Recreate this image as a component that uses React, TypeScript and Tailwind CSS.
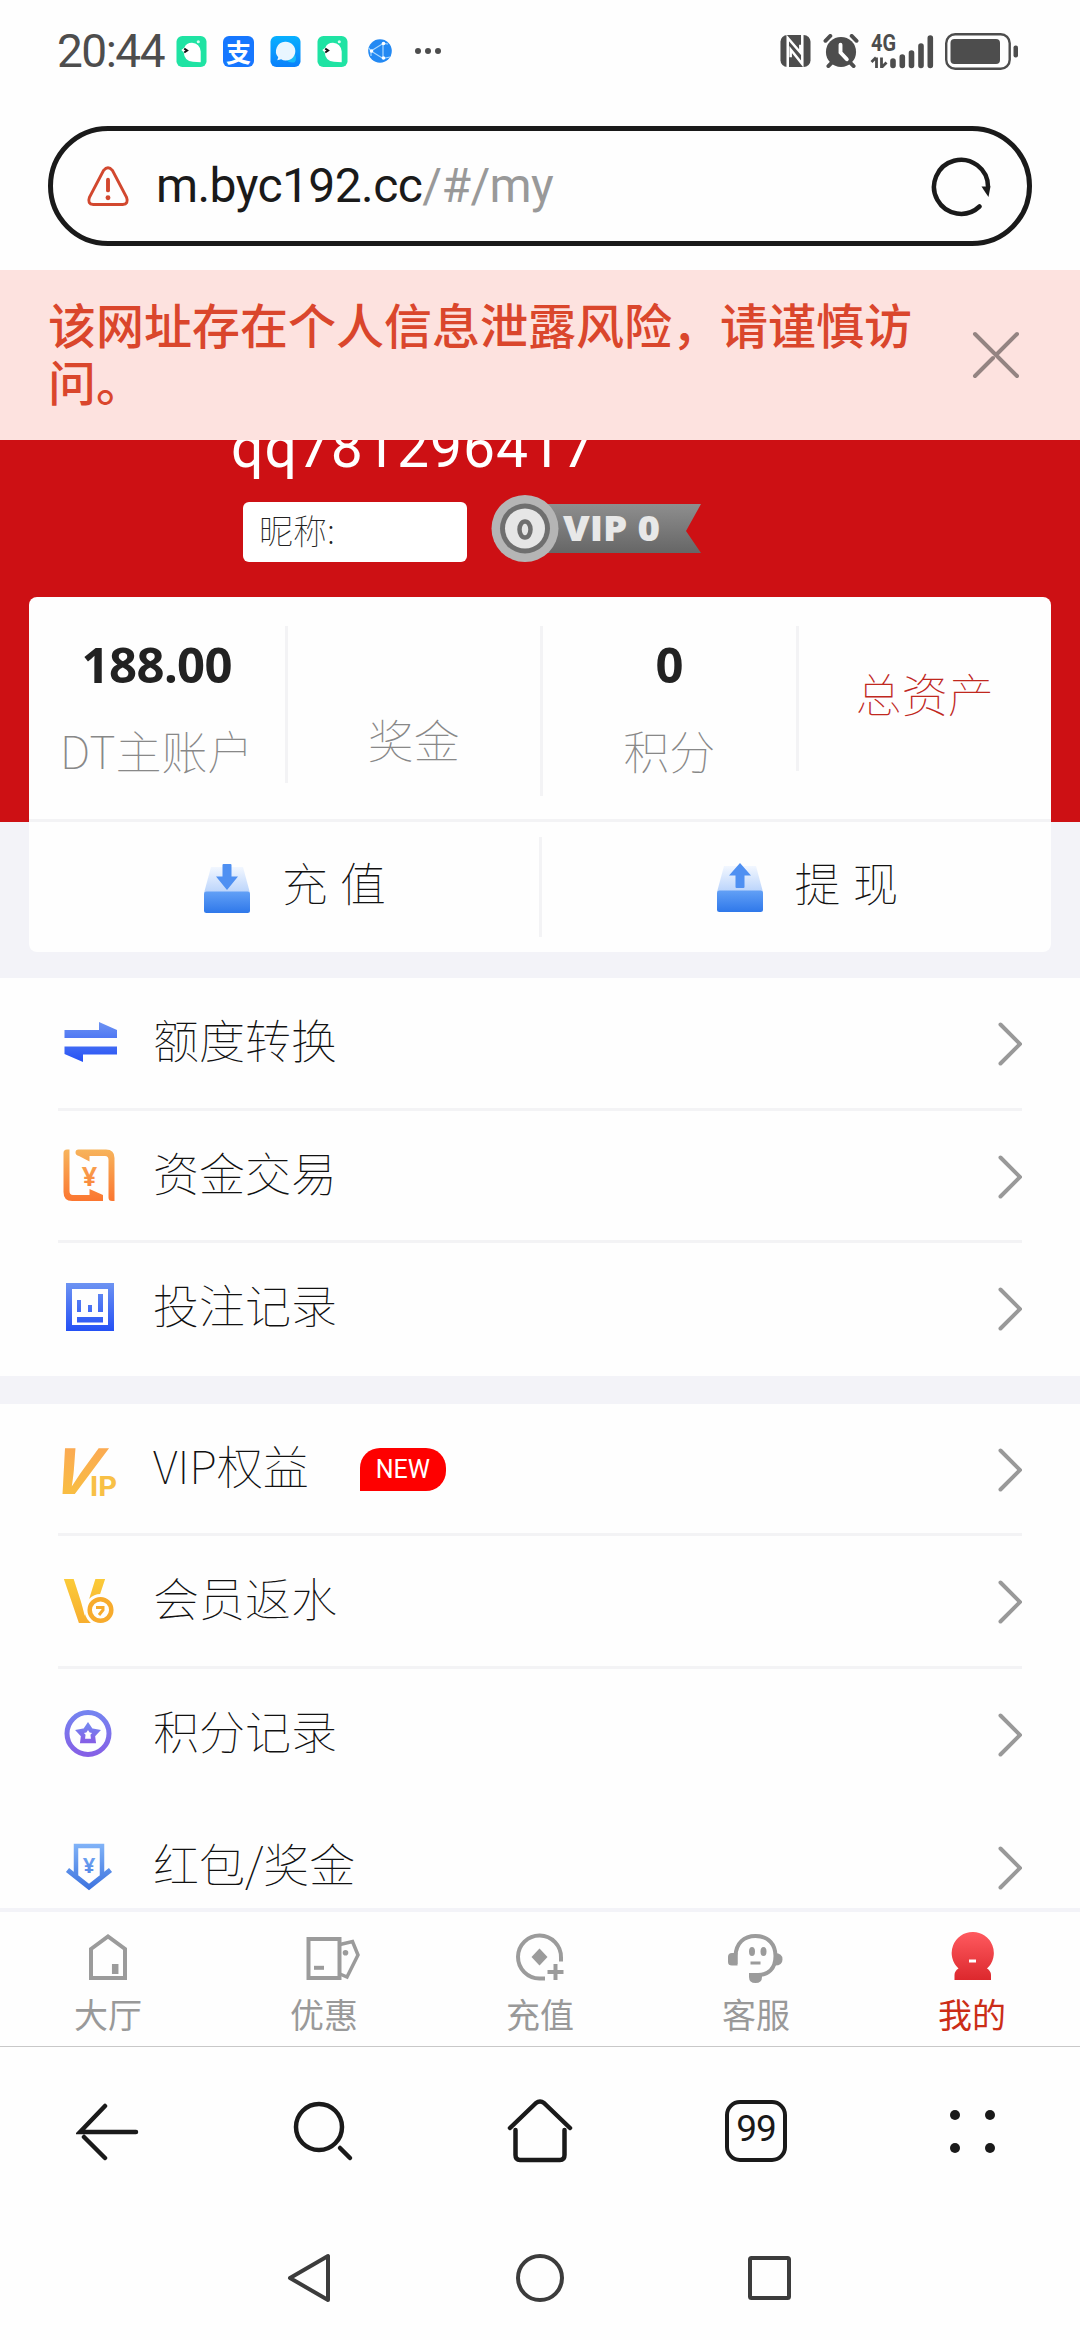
import React from "react";

const accounts = [
  { label: "DT主账户", value: "188.00" },
  { label: "奖金", value: "" },
  { label: "积分", value: "0" },
];

const tabs = [
  { name: "大厅", icon: <HallIcon /> },
  { name: "优惠", icon: <PromoIcon /> },
  { name: "充值", icon: <RechargeIcon /> },
  { name: "客服", icon: <ServiceIcon /> },
  { name: "我的", icon: <MineIcon />, active: true },
];

const recordMenu = [
  { name: "额度转换", icon: <TransferIcon /> },
  { name: "资金交易", icon: <FundsIcon /> },
  { name: "投注记录", icon: <BetIcon /> },
];

const memberMenu = [
  { name: "VIP权益", icon: <VipIcon />, isNew: true },
  { name: "会员返水", icon: <RebateIcon /> },
  { name: "积分记录", icon: <PointsIcon />, noLine: true },
  { name: "红包/奖金", icon: <BonusIcon />, noLine: true },
];

function Gradient({ id, from, to }: { id: string; from: string; to: string }) {
  return (
    <defs>
      <linearGradient id={id} x1="0" y1="0" x2="0" y2="1">
        <stop offset="0" stopColor={from} />
        <stop offset="1" stopColor={to} />
      </linearGradient>
    </defs>
  );
}

/* Menu icons */
function TransferIcon() {
  return (
    <svg width="60" height="60" viewBox="0 0 60 60">
      <defs>
        <linearGradient id="transfer" x1="0" y1="10" x2="0" y2="50" gradientUnits="userSpaceOnUse">
          <stop offset="0" stopColor="#6d93f2" />
          <stop offset="1" stopColor="#2450f5" />
        </linearGradient>
      </defs>
      <path d="M4.500 18H39V10L57 18V26H4.500Z M4.500 34.500H57V42.500H23V50L4.500 42Z" fill="url(#transfer)" />
    </svg>
  );
}

function FundsIcon() {
  return (
    <svg width="60" height="60" viewBox="0 0 60 60">
      <defs>
        <linearGradient id="funds" x1="0" y1="4" x2="0" y2="56" gradientUnits="userSpaceOnUse">
          <stop offset="0" stopColor="#f7b45c" />
          <stop offset="1" stopColor="#fb7630" />
        </linearGradient>
      </defs>
      <g fill="url(#funds)">
        <path d="M3.500 8Q3.500 4.500 7 4.500H9.500V46Q9.500 50 13 50H29.500V44L43 50V56H12Q3.500 56 3.500 47Z" />
        <path d="M15.500 7.500Q15.500 4.500 18.500 4.500H46Q54.500 4.500 54.500 13V56H52Q48.500 56 48.500 52.500V15Q48.500 11 45 11H29.500V16.500L19 11Q15.500 10 15.500 7.500Z" />
        <text x="29.500" y="40.500" textAnchor="middle" fontSize="27" fontWeight="700" fontFamily="Noto Sans, sans-serif">¥</text>
      </g>
    </svg>
  );
}

function BetIcon() {
  return (
    <svg width="60" height="60" viewBox="0 0 60 60">
      <defs>
        <linearGradient id="bet" x1="0" y1="6" x2="0" y2="54" gradientUnits="userSpaceOnUse">
          <stop offset="0" stopColor="#6d93f2" />
          <stop offset="1" stopColor="#2450f5" />
        </linearGradient>
      </defs>
      <path d="M6 6H54V54H6Z M12 12V48H48V12Z" fillRule="evenodd" fill="url(#bet)" />
      <path d="M17 23h4v12h-4Z M28 28h4v7h-4Z M38 17h5v18h-5Z M17 40h26v5.500h-26Z" fill="url(#bet)" />
    </svg>
  );
}

function VipIcon() {
  return (
    <svg className="overflow-visible" width="60" height="60" viewBox="0 0 60 60">
      <Gradient id="vip" from="#fca458" to="#f8c43c" />
      <g fill="url(#vip)" fontFamily="Inter, sans-serif" fontWeight="700">
        <text transform="translate(-15 56) skewX(-22)" fontSize="63" textLength="47" lengthAdjust="spacingAndGlyphs">V</text>
        <text x="30" y="58" fontSize="27" fill="#f8c046" textLength="27" lengthAdjust="spacingAndGlyphs">IP</text>
      </g>
    </svg>
  );
}

function RebateIcon() {
  return (
    <svg width="60" height="60" viewBox="0 0 60 60">
      <Gradient id="rebate" from="#fcd43c" to="#f6a52c" />
      <text x="2.500" y="53" fontSize="60" fontWeight="700" fontFamily="Inter, sans-serif" fill="url(#rebate)" textLength="44" lengthAdjust="spacingAndGlyphs">V</text>
      <circle cx="40.500" cy="40" r="16" fill="#fefefe" />
      <circle cx="40.500" cy="40" r="10.800" fill="none" stroke="#f7ab2d" strokeWidth="4.500" />
      <path d="M36 37.500H43V40L39 45" fill="none" stroke="#f7ab2d" strokeWidth="3" />
    </svg>
  );
}

function PointsIcon() {
  return (
    <svg width="60" height="60" viewBox="0 0 60 60">
      <Gradient id="points" from="#7583f0" to="#8560e6" />
      <g fill="none" stroke="url(#points)">
        <circle cx="28" cy="30.500" r="21" strokeWidth="5" />
        <path d="M28 23L31 27.500L36.500 28.500L32.800 32.500L33.500 38H22.500L23.200 32.500L19.500 28.500L25 27.500Z" strokeWidth="4.500" />
      </g>
    </svg>
  );
}

function BonusIcon() {
  return (
    <svg width="60" height="60" viewBox="0 0 60 60">
      <defs>
        <linearGradient id="bonus" x1="0" y1="7" x2="0" y2="54" gradientUnits="userSpaceOnUse">
          <stop offset="0" stopColor="#82b4f8" />
          <stop offset="1" stopColor="#3c72de" />
        </linearGradient>
      </defs>
      <path d="M7.500 34L29 51L50.500 34" fill="none" stroke="url(#bonus)" strokeWidth="5" />
      <path d="M16 39V10H42V39" fill="none" stroke="url(#bonus)" strokeWidth="4.500" />
      <text x="29" y="37" textAnchor="middle" fontSize="22" fontWeight="700" fontFamily="Noto Sans, sans-serif" fill="url(#bonus)">¥</text>
    </svg>
  );
}

/* Tab bar icons */
function HallIcon() {
  return (
    <svg width="60" height="50" viewBox="0 0 60 50" fill="none" stroke="#9b9b9b" strokeWidth="4">
      <path d="M13 17L30 4.500L47 17V46H13Z" />
      <path d="M37.200 32V42" strokeWidth="6.500" />
    </svg>
  );
}

function PromoIcon() {
  return (
    <svg className="overflow-visible" width="60" height="50" viewBox="0 0 60 50" fill="none" stroke="#9b9b9b" strokeWidth="4">
      <path d="M14.500 7H45.500V46H14.500Z" />
      <path d="M20 35.800H30" />
      <path d="M46 12.500L58.500 9.500L64 23L53 45L46 42" strokeWidth="3.500" />
      <circle cx="51.500" cy="20.700" r="2.800" fill="#9b9b9b" stroke="none" />
    </svg>
  );
}

function RechargeIcon() {
  return (
    <svg width="60" height="50" viewBox="0 0 60 50" fill="none" stroke="#9b9b9b" strokeWidth="4">
      <path d="M51 29.500V25.500A21.500 21.500 0 1 0 29.500 46.500H35" />
      <path d="M29.500 16.500L37.500 25L29.500 33.500L21.500 25Z" fill="#9b9b9b" stroke="none" />
      <path d="M45.500 32V48M37.500 40H53.500" />
    </svg>
  );
}

function ServiceIcon() {
  return (
    <svg width="60" height="54" viewBox="0 0 60 54" fill="none" stroke="#9b9b9b" strokeWidth="4">
      <path d="M9.500 32V24C10 11 18 4 29.500 4C43 4 49.500 13 49.500 24C49.500 37 42 43 32 43" />
      <path d="M2 25Q2 21 6 21H11.500V33.500H6Q2 33.500 2 30Z M49 21Q56.500 21 56.500 27.500Q56.500 33.500 49 33.500Z M23 41H36V45Q36 51 29.500 51Q23 51 23 45Z" fill="#9b9b9b" stroke="none" />
      <ellipse cx="26" cy="19.500" rx="3" ry="4.500" fill="#9b9b9b" stroke="none" />
      <ellipse cx="37.500" cy="19.500" rx="3" ry="4.500" fill="#9b9b9b" stroke="none" />
      <path d="M24.500 31H34.500" strokeWidth="3" />
    </svg>
  );
}

function MineIcon() {
  return (
    <svg width="60" height="50" viewBox="0 0 60 50">
      <Gradient id="mine" from="#ff5a5f" to="#dc282d" />
      <path d="M30.500 0A21 21 0 0 1 45 36.500Q49 39 49 43V48H12.500V43Q12.500 39 16.500 36.500A21 21 0 0 1 30.500 0Z" fill="url(#mine)" />
      <path d="M27 29H34" stroke="#fff" strokeWidth="3" />
    </svg>
  );
}

function TrayIcon({ up }: { up?: boolean }) {
  return (
    <svg width="46" height="50" viewBox="0 0 46 50">
      <Gradient id="trayTop" from="#f2f7ff" to="#b9d3fb" />
      <Gradient id="trayBox" from="#62a0f6" to="#2f78ea" />
      <path d="M7 3H39L46 29H0Z" fill="url(#trayTop)" />
      <rect x="0" y="27.500" width="46" height="21.500" rx="2.500" fill="url(#trayBox)" />
      {up ? (
        <path d="M23 0L34 12.500H27.500V24Q27.500 25 26.500 25H19.500Q18.500 25 18.500 24V12.500H12Z" fill="#4f90f2" />
      ) : (
        <path d="M23 26L34 12.500H27.500V1Q27.500 0 26.500 0H19.500Q18.500 0 18.500 1V12.500H12Z" fill="#4f90f2" />
      )}
    </svg>
  );
}

/* Status bar app icons */
function BirdApp() {
  return (
    <svg width="31" height="31" viewBox="0 0 31 32">
      <rect width="31" height="32" rx="6" fill="#1fe3a3" />
      <path d="M5 14.500L8 12Q10 7 16 7Q24 7.500 25 16V27Q21 26.500 17 26.500Q8 26 7.500 17Z" fill="#fff" />
      <circle cx="22.500" cy="6" r="1.600" fill="#d5fff0" />
      <path d="M8 13L11 15L8 17" stroke="#111" strokeWidth="2" fill="none" />
    </svg>
  );
}

function StatusBar() {
  return (
    <div className="flex h-[102px] shrink-0 items-center pl-[57px] pr-[62px] text-[#4d4d4d]">
      <span className="w-[119px] font-[Roboto] text-[46px] leading-none tracking-[-1.500px]">20:44</span>
      <div className="flex items-center gap-4">
        <BirdApp />
        <div className="flex h-[31px] w-[31px] items-center justify-center rounded-md bg-[#1677ff] font-['Noto_Sans_CJK_SC',sans-serif] text-[25px] leading-none font-bold text-white">
          支
        </div>
        <svg width="31" height="31" viewBox="0 0 31 32">
          <Gradient id="chatApp" from="#08b0ff" to="#0a80fb" />
          <rect width="31" height="32" rx="6" fill="url(#chatApp)" />
          <path d="M17 21Q25 16 26 21Q27 25 25 27Q19 28 17 25Z" fill="#17b9f8" />
          <path d="M15 6A9.700 9.700 0 1 1 11 24L7 25L8 22A9.700 9.700 0 0 1 15 6Z" fill="#e9f6ff" />
        </svg>
        <BirdApp />
      </div>
      <svg className="ml-5" width="24" height="24" viewBox="0 0 24 24">
        <circle cx="12" cy="12" r="11.800" fill="#2389f3" />
        <path d="M3 12L15 4.500V19.500ZM0 8L3 12V17M15 4.500L20 5M15 19.500L22 18" fill="none" stroke="#a9d8ff" strokeWidth="1.200" />
        <circle cx="3.500" cy="12" r="1.800" fill="#fff" />
        <circle cx="15.500" cy="4.500" r="1.800" fill="#fff" />
        <circle cx="15.500" cy="19" r="1.800" fill="#fff" />
      </svg>
      <div className="ml-[23px] flex gap-1">
        <i className="size-1.5 rounded-full bg-[#4d4d4d]" />
        <i className="size-1.5 rounded-full bg-[#4d4d4d]" />
        <i className="size-1.5 rounded-full bg-[#4d4d4d]" />
      </div>

      <svg className="ml-auto" width="31" height="32" viewBox="0 0 31 33">
        <rect width="31" height="33" rx="7" fill="#4d4d4d" />
        <path d="M7.500 33V3L20.500 18V10M22.500 0V30L10.500 15V23" fill="none" stroke="#fff" strokeWidth="2.600" />
      </svg>
      <svg className="ml-3" width="36" height="34" viewBox="0 0 36 35">
        <circle cx="18" cy="18.500" r="15.500" fill="#4d4d4d" />
        <path d="M2 7L7 2M34 7L29 2M5 33L9 29M31 33L27 29" stroke="#4d4d4d" strokeWidth="4" strokeLinecap="round" />
        <path d="M17.500 11V19L24 26" stroke="#fff" strokeWidth="4" fill="none" strokeLinecap="round" />
      </svg>
      <svg className="ml-3 overflow-visible" width="63" height="35" viewBox="0 0 63 35">
        <text x="0" y="17" fontSize="23" fontWeight="700" fontFamily="Roboto, sans-serif" fill="#4d4d4d" textLength="25" lengthAdjust="spacingAndGlyphs">4G</text>
        <path d="M5.500 23.500V34M0.500 28L5 23.500M10.500 23.500V34M11 33L15.500 28.500" stroke="#4d4d4d" strokeWidth="2.800" />
        <path d="M22 27V31.500M31.300 23V31.500M40.500 19V31.500M50 12V31.500M59.300 4V31.500" stroke="#4d4d4d" strokeWidth="5.600" strokeLinecap="round" />
      </svg>
      <svg className="ml-[11px]" width="73" height="37" viewBox="0 0 73 37">
        <rect x="1.200" y="1.200" width="63.500" height="34.600" rx="9" fill="none" stroke="#4d4d4d" strokeWidth="2.400" />
        <rect x="5.500" y="6" width="49.500" height="25" rx="4" fill="#4d4d4d" />
        <rect x="68.500" y="12.500" width="4.500" height="12" rx="2" fill="#4d4d4d" />
      </svg>
    </div>
  );
}

function AddressBar() {
  return (
    <div className="h-[168px] shrink-0 px-12 pt-6">
      <div className="flex h-[120px] items-center rounded-full border-[5px] border-[#1a1a1a] pr-[35px] pl-[33px]">
        <svg width="44" height="41" viewBox="0 0 44 42" fill="none" stroke="#d2482f" strokeLinecap="round">
          <path d="M17.500 4.500Q22 -1 26.500 4.500L41 32Q43.500 39 37 39.500H7Q0.500 39 3 32Z" strokeWidth="3" />
          <path d="M22 14V25" strokeWidth="4" />
          <path d="M22 32.500V32.600" strokeWidth="5" />
        </svg>
        <p className="ml-[26px] font-[Roboto] text-[48px] leading-[60px] tracking-[-0.600px] text-[#1a1a1a]">
          m.byc192.cc<span className="text-[#999]">/#/my</span>
        </p>
        <svg className="ml-auto" width="62" height="62" viewBox="0 0 62 62">
          <path d="M49.500 51.500A27 27 0 1 1 58 31.500" fill="none" stroke="#1a1a1a" strokeWidth="4.500" strokeLinecap="round" />
          <path d="M51.500 31.500H60.500L58.500 42Q55 37 51.500 31.500Z" fill="#1a1a1a" />
        </svg>
      </div>
    </div>
  );
}

function VipBadge() {
  return (
    <svg width="212" height="70" viewBox="0 0 212 70">
      <Gradient id="ribbon" from="#8e8e8e" to="#666" />
      <path d="M40 10H210L195 37L210 59H40Z" fill="url(#ribbon)" />
      <circle cx="34" cy="34.500" r="33.500" fill="#b5b5b5" />
      <circle cx="34" cy="34.500" r="25" fill="#6f6f6f" />
      <circle cx="34" cy="34.500" r="20" fill="#e6e6e6" />
      <ellipse cx="34" cy="35.500" rx="5.500" ry="8" fill="none" stroke="#6f6f6f" strokeWidth="4.500" />
      <text x="72" y="46.500" fontSize="36" fontWeight="800" fontFamily="Open Sans, sans-serif" fill="#e8e8e8" textLength="97" lengthAdjust="spacingAndGlyphs">VIP 0</text>
    </svg>
  );
}

function MenuRow({ item }: { item: { name: string; icon: React.ReactNode; isNew?: boolean; noLine?: boolean } }) {
  return (
    <div className={`flex h-[132.600px] shrink-0 items-start border-b-[3px] pt-[34px] ${item.noLine ? "border-transparent" : "border-[#f3f3f5]"}`}>
      <div className="ml-0.5 w-[93px]">{item.icon}</div>
      <span className="-mt-1 text-[46px] leading-[60px] font-thin text-[#111]">{item.name}</span>
      {item.isNew && (
        <span className="mt-2.5 ml-[51px] flex h-[43px] w-[86px] items-center justify-center rounded-[20px] rounded-bl-none bg-[#fe0000] font-[Roboto] text-[25px] text-white">
          NEW
        </span>
      )}
      <svg className="mt-2.5 ml-auto" width="25" height="44" viewBox="0 0 25 44" fill="none" stroke="#999" strokeWidth="4" strokeLinecap="round">
        <path d="M3.500 2.500L23 22L3.500 41.500" />
      </svg>
    </div>
  );
}

export default function App() {
  return (
    <div className="flex h-[2340px] w-[1080px] flex-col overflow-hidden bg-[#fefefe] font-['Noto_Sans_CJK_SC',sans-serif]">
      <StatusBar />
      <AddressBar />

      {/* Risk warning */}
      <div className="z-10 flex h-[170px] shrink-0 items-center bg-[#fde2df] pl-12">
        <p className="-mt-1.5 w-[870px] text-[48px] leading-[57px] font-medium text-[#da462c]">
          该网址存在个人信息泄露风险，请谨慎访问。
        </p>
        <svg className="ml-[54px]" width="48" height="48" viewBox="0 0 48 48" stroke="#948482" strokeWidth="4" strokeLinecap="round">
          <path d="M3 3L45 45M45 3L25 23M3 45L21 27" />
        </svg>
      </div>

      {/* Page content */}
      <div className="flex h-[1468px] shrink-0 flex-col overflow-hidden bg-[#f3f3f8]">
        <div className="h-[382px] shrink-0 bg-[#cd1014]">
          <p className="-mt-[24px] ml-[231px] h-[78px] font-[Roboto] text-[57px] leading-[64px] tracking-[1px] text-white">qq781296417</p>
          <div className="ml-[243px] flex items-center gap-6">
            <div className="mt-1.5 flex h-[60px] w-[224px] items-center rounded-md bg-white pb-1.5 pl-4 text-[34px] font-thin text-[#222]">昵称:</div>
            <VipBadge />
          </div>
        </div>

        {/* Account card */}
        <div className="z-10 mx-[29px] -mt-[225px] h-[355px] shrink-0 rounded-lg bg-[#fefefe]">
          <div className="grid h-[225px] grid-cols-4 items-start border-b-[3px] border-[#f3f3f5] pt-[29px]">
            {accounts.map((a, i) => (
              <div
                key={a.label}
                className={`flex flex-col items-center ${
                  i === 0 ? "h-[157px]" : i === 1 ? "h-[157px] border-l-[3px] border-[#f3f3f5]" : "h-[170px] border-l-[3px] border-[#f3f3f5]"
                }`}
              >
                <b className={`${a.value ? "mt-[11px] h-[82px]" : "h-[82px]"} font-['Noto_Sans'] text-[49px] leading-[54px] tracking-[-0.600px] text-[#222]`}>{a.value}</b>
                <span className="text-[46px] leading-[60px] font-thin text-[#888]">{a.label}</span>
              </div>
            ))}
            <div className="h-[145px] border-l-[3px] border-[#f3f3f5] pt-9 text-center text-[46px] leading-[60px] font-thin text-[#c0281e]">
              总资产
            </div>
          </div>
          <div className="flex h-[130px] items-start pt-[15px]">
            <div className="flex h-[100px] flex-1 pl-[175px]">
              <div className="mt-[27px]"><TrayIcon /></div>
              <span className="ml-8 text-[46px] leading-[88px] font-thin whitespace-pre text-[#111] [word-spacing:2px]">充 值</span>
            </div>
            <div className="flex h-[100px] flex-1 border-l-[3px] border-[#f3f3f5] pl-[175px]">
              <div className="mt-[26px]"><TrayIcon up /></div>
              <span className="ml-8 text-[46px] leading-[88px] font-thin whitespace-pre text-[#111] [word-spacing:2px]">提 现</span>
            </div>
          </div>
        </div>

        <div className="mt-[26px] shrink-0 bg-[#fefefe] px-[58px]">
          {recordMenu.map((item, i) => (
            <MenuRow key={item.name} item={{ ...item, noLine: i === recordMenu.length - 1 }} />
          ))}
        </div>
        <div className="mt-7 shrink-0 bg-[#fefefe] px-[58px]">
          {memberMenu.map((item) => (
            <MenuRow key={item.name} item={item} />
          ))}
        </div>
      </div>

      {/* Site tabs */}
      <div className="z-10 flex h-[139px] shrink-0 border-t-4 border-b border-t-[#f3f3f8] border-b-[#c8c8c8] bg-[#fefefe]">
        {tabs.map((tab) => (
          <div key={tab.name} className="flex flex-1 flex-col items-center pt-5">
            <div className="h-[57px]">{tab.icon}</div>
            <span className={`text-[34px] leading-[50px] ${tab.active ? "text-[#cb2d17]" : "text-[#999]"}`}>{tab.name}</span>
          </div>
        ))}
      </div>

      {/* Browser toolbar */}
      <div className="grid h-[168px] shrink-0 grid-cols-5 place-items-center">
        <svg width="64" height="64" viewBox="0 0 64 64" fill="none" stroke="#1a1a1a" strokeWidth="4.500" strokeLinecap="round">
          <path d="M29 7L4 33H60M8 38L29 59" />
        </svg>
        <svg width="64" height="64" viewBox="0 0 64 64" fill="none" stroke="#1a1a1a" strokeWidth="4.500" strokeLinecap="round">
          <circle cx="27" cy="28" r="23" />
          <path d="M48 49L58 59" />
        </svg>
        <svg width="66" height="64" viewBox="0 0 66 64" fill="none" stroke="#1a1a1a" strokeWidth="4.500" strokeLinecap="round" strokeLinejoin="round">
          <path d="M3 29L29 4Q33 1 37 4L63 29M8.500 31V56Q8.500 61 13 61H53Q57.500 61 57.500 56V31" />
        </svg>
        <div className="flex size-[62px] items-center justify-center rounded-[15px] border-[4.500px] border-[#1a1a1a] pb-1 font-[Roboto] text-[37px] tracking-[-1px] text-[#1a1a1a]">
          99
        </div>
        <div className="grid grid-cols-2 gap-x-[25px] gap-y-[23px]">
          <i className="size-2.5 rounded-full bg-[#1a1a1a]" />
          <i className="size-2.5 rounded-full bg-[#1a1a1a]" />
          <i className="size-2.5 rounded-full bg-[#1a1a1a]" />
          <i className="size-2.5 rounded-full bg-[#1a1a1a]" />
        </div>
      </div>

      {/* System navigation */}
      <div className="flex flex-1 items-center justify-center gap-[181px]">
        <svg width="50" height="50" viewBox="0 0 50 50" fill="none" stroke="#3c3c3c" strokeWidth="4" strokeLinejoin="round">
          <path d="M5 25L43 3V47Z" />
        </svg>
        <svg width="48" height="48" viewBox="0 0 48 48" fill="none" stroke="#3c3c3c" strokeWidth="4">
          <circle cx="24" cy="24" r="22" />
        </svg>
        <svg width="50" height="44" viewBox="0 0 50 44" fill="none" stroke="#3c3c3c" strokeWidth="4">
          <rect x="5" y="2" width="39" height="40" rx="1.500" />
        </svg>
      </div>
    </div>
  );
}
